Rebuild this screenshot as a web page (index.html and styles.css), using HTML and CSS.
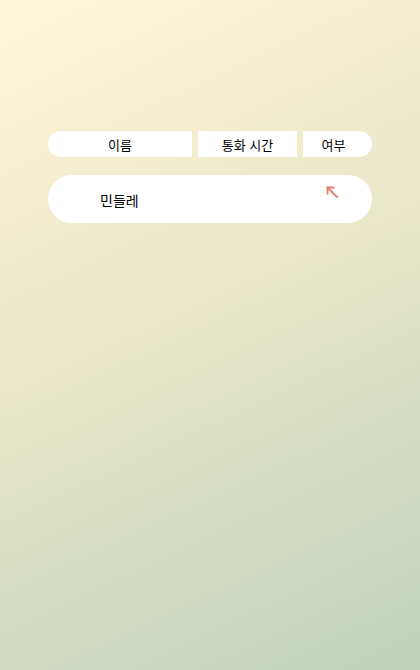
FILE: index.html
```html
<!DOCTYPE html>
<html lang="ko">
<head>
<meta charset="utf-8">
<link rel="stylesheet" href="styles.css">
</head>
<body>
<main class="page">
  <div class="table-head">
    <div class="th th-first">이름</div>
    <div class="th">통화 시간</div>
    <div class="th th-last">여부</div>
  </div>
  <div class="row">
    <span class="name">민들레</span>
    <svg class="arrow" width="14" height="14" viewBox="0 0 14 14" aria-hidden="true">
      <path d="M12 12 L2.5 2.5 M2.5 2.5 L2.5 8.5 M2.5 2.5 L8.5 2.5" fill="none" stroke="#e2836f" stroke-width="2" stroke-linecap="square"/>
    </svg>
  </div>
</main>
</body>
</html>
```

FILE: styles.css
```css
html, body {
  margin: 0;
  padding: 0;
  height: 100%;
}
body {
  background: linear-gradient(155deg, #fff6d8 0%, #e9e8c8 45%, #c1d1bc 100%);
  font-family: "Noto Sans CJK KR", "Noto Sans", sans-serif;
  color: #000;
  min-height: 670px;
}
.page {
  padding: 131px 48px 0;
  display: flex;
  flex-direction: column;
  gap: 18px;
}
.table-head {
  display: grid;
  grid-template-columns: 144px 99px 69px;
  column-gap: 6px;
  height: 26px;
}
.th {
  background: #fff;
  display: flex;
  align-items: center;
  justify-content: center;
  font-size: 13px;
  line-height: 1;
}
.th-first {
  border-radius: 13px 0 0 13px;
}
.th-last {
  border-radius: 0 13px 13px 0;
  padding-right: 8px;
}
.row {
  background: #fff;
  height: 48px;
  border-radius: 24px;
  display: flex;
  align-items: center;
  padding: 0 33px 0 52px;
  position: relative;
}
.name {
  font-size: 14px;
  flex: 1;
  margin-top: 1px;
}
.arrow {
  align-self: flex-start;
  margin-top: 10px;
}
```
